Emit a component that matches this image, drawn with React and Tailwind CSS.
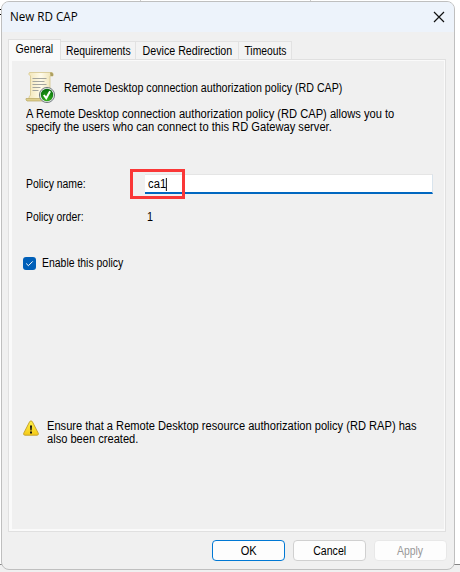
import React from "react";

function ScrollIcon() {
  return (
    <svg className="h-[33px] w-[31px] shrink-0" viewBox="0 0 31 33">
      <defs>
        <linearGradient id="paper" x1="0" x2="1">
          <stop offset="0" stopColor="#f3e6b8" />
          <stop offset=".5" stopColor="#fffbea" />
          <stop offset="1" stopColor="#ecdfae" />
        </linearGradient>
        <radialGradient id="seal" cx=".5" cy=".85" r=".8">
          <stop offset="0" stopColor="#35b51c" />
          <stop offset="1" stopColor="#08700d" />
        </radialGradient>
      </defs>
      <path d="M4.500 1.500H27q1.500.5 1 3.500H25V29H4V26L5.500 24V5Q2.500 3 4.500 1.500Z" fill="url(#paper)" stroke="#d5c78e" strokeWidth=".8" />
      <path d="M25 1.500h2.300q1.600 1.500.7 3.500h-2.500z" fill="#ad9f60" />
      <path d="M1 27.500h18v2.500H2q-1.500-1-1-2.500Z" fill="#dfcf8e" stroke="#b7a661" strokeWidth=".7" />
      <path d="M7.500 7.500h14M7.500 10.500h12M7.500 13.500h14M7.500 16.500h8M7.500 19.500h6" stroke="#a4a59f" strokeWidth="1" />
      <circle cx="22" cy="24" r="7.600" fill="#e2e5e6" stroke="#777f83" strokeWidth="1" />
      <circle cx="22" cy="24" r="6.200" fill="url(#seal)" />
      <path d="m18.800 24 2.400 3.200 3.900-7" fill="none" stroke="#fff" strokeWidth="2" />
    </svg>
  );
}

function WarningIcon() {
  return (
    <svg className="h-4 w-4 shrink-0" viewBox="0 0 16 16">
      <defs>
        <linearGradient id="warn" x2="0" y2="1">
          <stop offset="0" stopColor="#fff24a" />
          <stop offset="1" stopColor="#f5c916" />
        </linearGradient>
      </defs>
      <path d="M6.700 1.600q1.300-1.500 2.600 0l6 11.700q.5 1.900-1.300 1.900H2q-1.800 0-1.300-1.900Z" fill="url(#warn)" stroke="#c6a432" />
      <path d="M7 5.500h2l-.4 5H7.400ZM7 11.500h2v2H7Z" fill="#111" />
    </svg>
  );
}

const tab = "flex h-[18px] items-center justify-center border-t border-r border-[#e2e2e2] bg-[#f3f3f3] pt-[2px]";
const button = "flex h-[21px] w-[73px] items-center justify-center rounded-[4px] border bg-[#fdfdfd] pt-px";

export default function App() {
  return (
    <div className="relative h-[572px] w-[460px] overflow-hidden bg-white font-['Liberation_Sans',Arial,sans-serif] text-[12px] leading-[13px] text-black">
      <div className="absolute top-[564px] left-0 h-2 w-full border-t border-[#858585] bg-[#f0f0f0]" />
      <div className="absolute top-0 left-[140px] h-px w-px bg-[#ccc]" />
      <div className="absolute top-0 left-[310px] h-px w-px bg-[#ccc]" />
      <div className="absolute top-[9px] left-0 h-[6px] w-px border-y border-black" />
      <div className="relative mt-px ml-px flex h-[569px] w-[454px] flex-col overflow-hidden rounded-[8px] border border-[#bfbfbf] bg-[#f0f0f0]">
        <header className="flex h-[30px] shrink-0 items-center justify-between bg-[#edf3fb] pr-[9px] pl-2 font-['Open_Sans',sans-serif]">
          <span className="-mt-px origin-left scale-x-[0.97] text-[12px]">New RD CAP</span>
          <svg className="h-3 w-3" viewBox="0 0 12 12"><path d="m1 1 10 10M11 1 1 11" stroke="#111" strokeWidth="1.200" /></svg>
        </header>
        <nav className="mt-[7px] ml-[6px] flex h-5 shrink-0 items-end">
          <div className="relative z-10 -mb-px flex h-[21px] w-[53px] items-center justify-center border-x border-t border-[#e0e0e0] bg-[#fafafa] pb-[2px]"><span className="scale-x-[0.88]">General</span></div>
          <div className={`${tab} w-[75px]`}><span className="scale-x-[0.865]">Requirements</span></div>
          <div className={`${tab} w-[103px]`}><span className="scale-x-[0.89] whitespace-nowrap">Device Redirection</span></div>
          <div className={`${tab} w-[53px]`}><span className="scale-x-[0.86]">Timeouts</span></div>
        </nav>
        <main className="ml-[6px] flex h-[473px] w-[438px] shrink-0 flex-col border border-[#e0e0e0] bg-[#fafafa] pt-px pr-px pb-[2px] pl-[3px]">
          <div className="flex grow flex-col bg-[#f0f0f0]">
            <div className="mt-[10px] ml-[13px] flex">
              <ScrollIcon />
              <span className="mt-[11px] ml-2 origin-left scale-x-[0.888] whitespace-nowrap">Remote Desktop connection authorization policy (RD CAP)</span>
            </div>
            <p className="mt-[4px] ml-[14px] origin-left scale-x-[0.928] self-start whitespace-nowrap">A Remote Desktop connection authorization policy (RD CAP) allows you to<br />specify the users who can connect to this RD Gateway server.</p>
            <div className="mt-[40px] ml-[14px] flex h-5 items-center">
              <span className="w-[119px] shrink-0 origin-left scale-x-[0.87]">Policy name:</span>
              <div className="flex h-5 w-[288px] items-center border-t border-r border-b-2 border-t-[#e5e5e5] border-r-[#d9e4ed] border-b-[#0067c0] bg-white pt-px pl-[3px]">
                <div className="flex origin-left scale-x-[0.94]"><span>ca1</span><span className="h-[13px] w-px bg-black" /></div>
              </div>
            </div>
            <div className="mt-[17px] ml-[14px] flex">
              <span className="w-[121px] origin-left scale-x-[0.865]">Policy order:</span><span className="origin-left scale-x-[0.9]">1</span>
            </div>
            <div className="mt-[33px] ml-[11px] flex items-center">
              <div className="flex h-[13px] w-[13px] items-center justify-center rounded-[3px] bg-[#005fb8]">
                <svg className="h-[9px] w-[9px]" viewBox="0 0 9 9"><path d="m1.200 4.500 2.200 2.200 4.300-4.300" fill="none" stroke="#fff" /></svg>
              </div>
              <span className="ml-[6px] origin-left scale-x-[0.87]">Enable this policy</span>
            </div>
            <div className="mt-[150px] ml-[11px] flex">
              <WarningIcon />
              <p className="ml-2 origin-left scale-x-[0.925] whitespace-nowrap">Ensure that a Remote Desktop resource authorization policy (RD RAP) has<br />also been created.</p>
            </div>
          </div>
        </main>
        <footer className="mt-2 mr-[7px] flex justify-end gap-2">
          <div className={`${button} border-[#0078d4]`}><span className="scale-x-[0.92]">OK</span></div>
          <div className={`${button} border-[#d0d0d0]`}><span className="scale-x-[0.88]">Cancel</span></div>
          <div className={`${button} border-[#e8e8e8] text-[#999]`}><span className="scale-x-[0.87]">Apply</span></div>
        </footer>
        <div className="absolute top-[167px] left-[128px] h-[30px] w-[55px] border-[3px] border-[#fa3737]" />
      </div>
    </div>
  );
}
